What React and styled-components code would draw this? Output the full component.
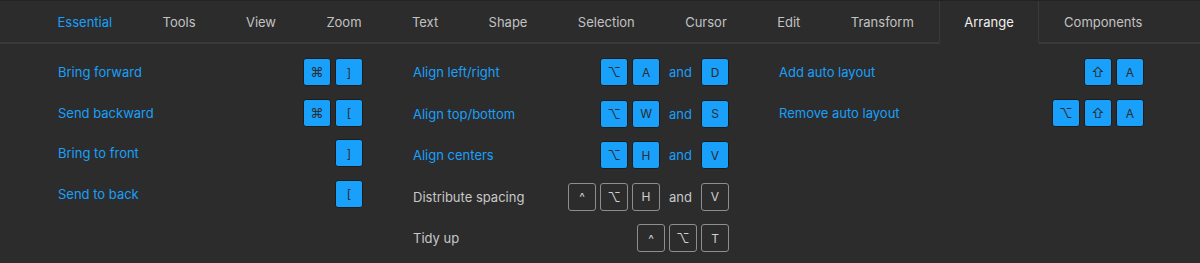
import React from 'react'
import styled, { createGlobalStyle } from 'styled-components'

const GlobalStyle = createGlobalStyle`
  body {
    margin: 0;
    background: #2c2c2c;
    font-family: 'Inter', 'DejaVu Sans', sans-serif;
  }
`

const Panel = styled.div`
  width: 1200px;
  height: 263px;
  background: #2c2c2c;
  border-top: 1px solid #232323;
  box-sizing: border-box;
`

const TabBar = styled.div`
  display: flex;
  justify-content: center;
  height: 41px;
  border-bottom: 2px solid #3a3a3a;
`

const Tab = styled.div`
  display: flex;
  align-items: center;
  padding: 0 ${(p) => (p.active ? '24.2px' : '25.2px')};
  font-size: 13px;
  color: ${(p) => (p.active ? '#f0f0f0' : p.highlight ? '#18a0fb' : '#c2c2c2')};
  ${(p) =>
    p.active &&
    `
    border-left: 1px solid #3a3a3a;
    border-right: 1px solid #3a3a3a;
    border-bottom: 2px solid #2c2c2c;
    margin-bottom: -2px;
  `}
`

const Columns = styled.div`
  display: grid;
  grid-template-columns: 305px 316px 1fr;
  column-gap: 50px;
  padding: 14px 56px 0 58px;
`

const Column = styled.div`
  display: flex;
  flex-direction: column;
  gap: ${(p) => p.gap}px;
`

const Row = styled.div`
  display: flex;
  justify-content: space-between;
  align-items: center;
  height: 28px;
`

const Label = styled.span`
  font-size: 13px;
  color: ${(p) => (p.muted ? '#c8c8c8' : '#18a0fb')};
`

const Keys = styled.div`
  display: flex;
  align-items: center;
  gap: 4px;
`

const Key = styled.span`
  display: flex;
  align-items: center;
  justify-content: center;
  width: 28px;
  height: 28px;
  box-sizing: border-box;
  border-radius: 3px;
  font-size: ${(p) => (p.symbol ? '13px' : '12px')};
  font-family: 'Inter', 'DejaVu Sans', sans-serif;
  background: ${(p) => (p.outline ? 'transparent' : '#18a0fb')};
  color: ${(p) => (p.outline ? '#cfcfcf' : '#2c2c2c')};
  border: 1px solid ${(p) => (p.outline ? '#8e8e8e' : '#1d1d1d')};
`

const And = styled.span`
  font-size: 13px;
  margin: 0 5px;
  color: ${(p) => (p.muted ? '#c8c8c8' : '#18a0fb')};
`

const tabs = ['Essential', 'Tools', 'View', 'Zoom', 'Text', 'Shape', 'Selection', 'Cursor', 'Edit', 'Transform', 'Arrange', 'Components']

const symbols = ['⌘', '⌥', '⇧']

// each combo: list of key groups joined by "and"
const columns = [
  {
    gap: 12.5,
    rows: [
      { label: 'Bring forward', combo: [['⌘', ']']] },
      { label: 'Send backward', combo: [['⌘', '[']] },
      { label: 'Bring to front', combo: [[']']] },
      { label: 'Send to back', combo: [['[']] },
    ],
  },
  {
    gap: 13.5,
    rows: [
      { label: 'Align left/right', combo: [['⌥', 'A'], ['D']] },
      { label: 'Align top/bottom', combo: [['⌥', 'W'], ['S']] },
      { label: 'Align centers', combo: [['⌥', 'H'], ['V']] },
      { label: 'Distribute spacing', muted: true, combo: [['^', '⌥', 'H'], ['V']] },
      { label: 'Tidy up', muted: true, combo: [['^', '⌥', 'T']] },
    ],
  },
  {
    gap: 13,
    rows: [
      { label: 'Add auto layout', combo: [['⇧', 'A']] },
      { label: 'Remove auto layout', combo: [['⌥', '⇧', 'A']] },
    ],
  },
]

export default function App() {
  return (
    <>
      <GlobalStyle />
      <Panel>
        <TabBar>
          {tabs.map((t) => (
            <Tab key={t} active={t === 'Arrange'} highlight={t === 'Essential'}>
              {t}
            </Tab>
          ))}
        </TabBar>
        <Columns>
          {columns.map((col, i) => (
            <Column key={i} gap={col.gap}>
              {col.rows.map((row) => (
                <Row key={row.label}>
                  <Label muted={row.muted}>{row.label}</Label>
                  <Keys>
                    {row.combo.map((group, g) => (
                      <React.Fragment key={g}>
                        {g > 0 && <And muted={row.muted}>and</And>}
                        {group.map((k, j) => (
                          <Key key={j} outline={row.muted} symbol={symbols.includes(k)}>
                            {k}
                          </Key>
                        ))}
                      </React.Fragment>
                    ))}
                  </Keys>
                </Row>
              ))}
            </Column>
          ))}
        </Columns>
      </Panel>
    </>
  )
}
